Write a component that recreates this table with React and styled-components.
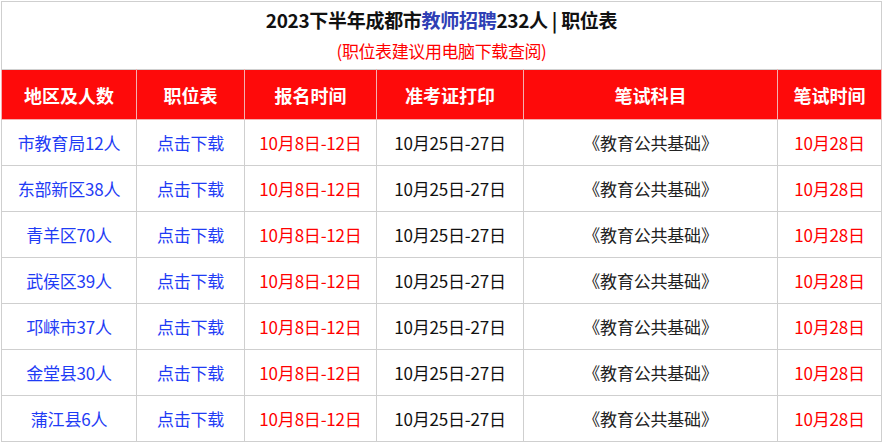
import React from "react";
import styled, { createGlobalStyle } from "styled-components";

const columns = [
  { title: "地区及人数", width: 135 },
  { title: "职位表", width: 108 },
  { title: "报名时间", width: 132 },
  { title: "准考证打印", width: 147 },
  { title: "笔试科目", width: 254 },
  { title: "笔试时间", width: 104 },
];

const regions = [
  "市教育局12人",
  "东部新区38人",
  "青羊区70人",
  "武侯区39人",
  "邛崃市37人",
  "金堂县30人",
  "蒲江县6人",
];

const App = () => {
  return (
    <>
      <GlobalStyle />
      <Page>
        <TitleBox>
          <Title>
            2023下半年成都市<Highlight>教师招聘</Highlight>232人 | 职位表
          </Title>
          <Subtitle>(职位表建议用电脑下载查阅)</Subtitle>
        </TitleBox>
        <Table>
          <colgroup>
            {columns.map((c) => (
              <col key={c.title} style={{ width: c.width }} />
            ))}
          </colgroup>
          <thead>
            <tr>
              {columns.map((c) => (
                <HeadCell key={c.title}>{c.title}</HeadCell>
              ))}
            </tr>
          </thead>
          <tbody>
            {regions.map((r) => (
              <tr key={r}>
                <Cell $color="#1f3cf5">{r}</Cell>
                <Cell $color="#1f3cf5">点击下载</Cell>
                <Cell $color="#ff0000">10月8日-12日</Cell>
                <Cell $color="#111">10月25日-27日</Cell>
                <Cell $color="#222">《教育公共基础》</Cell>
                <Cell $color="#ff0000">10月28日</Cell>
              </tr>
            ))}
          </tbody>
        </Table>
      </Page>
    </>
  );
};

export default App;

const GlobalStyle = createGlobalStyle`
  body {
    margin: 0;
    background: #fff;
    font-family: "Noto Sans CJK SC", "Noto Sans", sans-serif;
  }
`;

const Page = styled.div`
  width: 881px;
  margin-left: 1px;
  padding-top: 1px;
`;

const TitleBox = styled.div`
  height: 67px;
  border: 1px solid #cfcfcf;
  border-bottom: none;
  display: flex;
  flex-direction: column;
  align-items: center;
`;

const Title = styled.div`
  margin-top: 5px;
  font-size: 19px;
  font-weight: 700;
  color: #111;
  line-height: 26px;
  letter-spacing: -0.3px;
`;

const Highlight = styled.span`
  color: #2f3fb5;
`;

const Subtitle = styled.div`
  margin-top: 6px;
  font-size: 17px;
  color: #ff0000;
  line-height: 24px;
  letter-spacing: -0.4px;
`;

const Table = styled.table`
  width: 881px;
  border-collapse: collapse;
  table-layout: fixed;
`;

const HeadCell = styled.th`
  height: 49px;
  padding: 0;
  background: #fe0a0a;
  color: #fff;
  font-size: 18px;
  font-weight: 700;
  text-align: center;
  border: 1px solid #f3b0b0;
  border-top: 1px solid #cfcfcf;
`;

const Cell = styled.td`
  height: 45px;
  padding: 0;
  text-align: center;
  font-size: 17px;
  color: ${(p) => p.$color};
  border: 1px solid #cfcfcf;
  letter-spacing: -0.2px;
`;
